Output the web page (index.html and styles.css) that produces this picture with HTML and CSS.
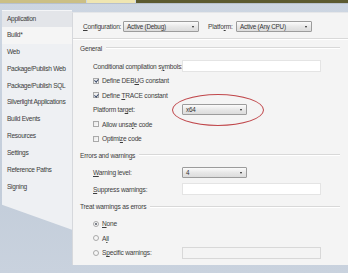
FILE: index.html
```html
<!DOCTYPE html>
<html lang="en">
<head>
  <meta charset="UTF-8">
  <title>Build properties</title>
  <link rel="stylesheet" href="styles.css">
</head>
<body>
  <div class="tabstrip">
    <span class="tab tab-a"></span>
    <span class="tab tab-b"></span>
    <span class="tab tab-c"></span>
  </div>

  <div class="frame">
    <ul class="nav">
      <li class="nav-item first">Application</li>
      <li class="nav-item active">Build*</li>
      <li class="nav-item">Web</li>
      <li class="nav-item">Package/Publish Web</li>
      <li class="nav-item">Package/Publish SQL</li>
      <li class="nav-item">Silverlight Applications</li>
      <li class="nav-item">Build Events</li>
      <li class="nav-item">Resources</li>
      <li class="nav-item">Settings</li>
      <li class="nav-item">Reference Paths</li>
      <li class="nav-item">Signing</li>
    </ul>

    <div class="panel">
      <div class="config-row">
        <span class="lbl cfg-lbl"><u>C</u>onfiguration:</span>
        <div class="select sel-config">Active (Debug)<span class="arrow"></span></div>
        <span class="lbl plat-lbl">Platfo<u>r</u>m:</span>
        <div class="select sel-config">Active (Any CPU)<span class="arrow"></span></div>
      </div>
      <div class="divider"></div>

      <div class="section-head first-head">General</div>
      <div class="row">
        <span class="row-lbl">Conditional compilation s<u>y</u>mbols:</span>
        <div class="textbox"></div>
      </div>
      <div class="row">
        <span class="check on"></span><span>Define DEB<u>U</u>G constant</span>
      </div>
      <div class="row">
        <span class="check on"></span><span>Define <u>T</u>RACE constant</span>
      </div>
      <div class="row target-row">
        <span class="row-lbl">Platform tar<u>g</u>et:</span>
        <div class="select sel-small">x64<span class="arrow"></span></div>
        <div class="ring"></div>
      </div>
      <div class="row">
        <span class="check"></span><span>Allow unsa<u>f</u>e code</span>
      </div>
      <div class="row">
        <span class="check"></span><span>Optimi<u>z</u>e code</span>
      </div>

      <div class="section-head">Errors and warnings</div>
      <div class="row tall first-tall">
        <span class="row-lbl"><u>W</u>arning level:</span>
        <div class="select sel-small">4<span class="arrow"></span></div>
      </div>
      <div class="row tall">
        <span class="row-lbl"><u>S</u>uppress warnings:</span>
        <div class="textbox"></div>
      </div>

      <div class="section-head">Treat warnings as errors</div>
      <div class="row first-radio">
        <span class="radio on"></span><span><u>N</u>one</span>
      </div>
      <div class="row">
        <span class="radio"></span><span>A<u>l</u>l</span>
      </div>
      <div class="row">
        <span class="radio"></span><span class="row-lbl radio-lbl">S<u>p</u>ecific warnings:</span>
        <div class="textbox dim"></div>
      </div>
    </div>
  </div>
</body>
</html>
```

FILE: styles.css
```css
html, body {
  margin: 0;
  padding: 0;
  height: 100%;
  overflow: hidden;
}

body {
  font-family: "Liberation Sans", Arial, sans-serif;
  font-size: 6.6px;
  letter-spacing: -0.2px;
  color: #3d3d3d;
  background: linear-gradient(#cdd6e2, #c3cdda 70%, #c9d2de);
}

u {
  text-decoration: underline;
  text-underline-offset: 1px;
}

.tabstrip {
  display: flex;
  height: 3px;
  border-bottom: 1px solid #b7c0cc;
}

.tab-a {
  width: 86px;
  background: #cbbf85;
}

.tab-b {
  width: 48px;
  margin-left: 1px;
  background: #efe6b2;
}

.tab-c {
  flex: 1;
  margin-left: 1px;
  background: #5b5a30;
}

.frame {
  display: flex;
  align-items: flex-start;
  padding-left: 2px;
}

/* left navigation */
.nav {
  list-style: none;
  margin: 6px 0 0;
  padding: 0 0 34px;
  width: 70px;
  background: #eef0f3;
  clip-path: polygon(0 0, 100% 0, 100% 100%, 0 calc(100% - 25px));
  position: relative;
  z-index: 2;
  letter-spacing: -0.3px;
}

.nav-item {
  height: 16.9px;
  line-height: 16.9px;
  padding-left: 5px;
  white-space: nowrap;
  color: #3c3c3c;
}

.nav-item.first {
  background: #e3e5e9;
  border-top: 1px solid #f4f5f7;
  height: 15.9px;
}

.nav-item.active {
  background: #f5f5f5;
  margin-right: -1px;
}

/* main panel */
.panel {
  flex: 1;
  margin-top: 8px;
  height: 253px;
  background: #f4f4f4;
  border-left: 1px solid #d6d8dc;
  border-top: 1px solid #e6e7e9;
  box-sizing: border-box;
  padding-left: 7px;
  position: relative;
}

.config-row {
  display: flex;
  align-items: center;
  height: 11px;
  margin-top: 8px;
  padding-left: 3px;
}

.cfg-lbl {
  width: 40px;
}

.plat-lbl {
  margin-left: 9px;
  width: 28px;
}

.select {
  position: relative;
  height: 11px;
  line-height: 10px;
  box-sizing: border-box;
  border: 1px solid #9c9c9c;
  border-radius: 1px;
  background: linear-gradient(#fbfbfb, #e6e6e6 55%, #dcdcdc);
  padding-left: 3px;
  font-size: 6.3px;
  color: #333;
}

.sel-config {
  width: 76px;
}

.sel-small {
  width: 65px;
}

.arrow {
  position: absolute;
  right: 4px;
  top: 4px;
  border-left: 1.5px solid transparent;
  border-right: 1.5px solid transparent;
  border-top: 2px solid #222;
}

.divider {
  margin: 6px 0 0 -7px;
  border-top: 1px solid #d9d9d9;
  border-bottom: 1px solid #ffffff;
}

.section-head {
  display: flex;
  align-items: center;
  height: 10px;
  margin-top: 4px;
  margin-right: 8px;
  white-space: nowrap;
}

.first-head {
  margin-top: 3px;
}

.section-head::after {
  content: "";
  flex: 1;
  margin-left: 4px;
  border-top: 1px solid #d8d8d8;
  border-bottom: 1px solid #fff;
}

.row {
  display: flex;
  align-items: center;
  height: 14.5px;
  padding-left: 13px;
  white-space: nowrap;
}

.section-head + .row {
  margin-top: 6px;
}

.row.tall {
  height: 17px;
}

.section-head + .row.first-tall {
  margin-top: 3.5px;
}

.section-head + .row.first-radio {
  margin-top: 4.75px;
}

.row-lbl {
  width: 89px;
  flex: none;
}

.radio-lbl {
  width: 80px;
}

.textbox {
  width: 139px;
  height: 12px;
  box-sizing: border-box;
  background: #ffffff;
  border: 1px solid #e4e4e4;
}

.textbox.dim {
  background: #f4f4f4;
  border-color: #d8d8d8;
}

.check {
  width: 6px;
  height: 6px;
  margin-right: 3px;
  box-sizing: border-box;
  border: 1px solid #a9a9a9;
  background: linear-gradient(135deg, #e8e8e8, #fafafa);
  position: relative;
}

.check.on::after {
  content: "";
  position: absolute;
  left: 1px;
  top: -0.5px;
  width: 1.5px;
  height: 3px;
  border-right: 1px solid #3b4b6b;
  border-bottom: 1px solid #3b4b6b;
  transform: rotate(40deg);
}

.radio {
  width: 6px;
  height: 6px;
  margin-right: 3px;
  box-sizing: border-box;
  border: 1px solid #a9a9a9;
  border-radius: 50%;
  background: #f6f6f6;
  position: relative;
}

.radio.on::after {
  content: "";
  position: absolute;
  left: 1px;
  top: 1px;
  width: 2px;
  height: 2px;
  border-radius: 50%;
  background: #555a66;
}

.target-row {
  position: relative;
}

/* red highlight ellipse drawn over the platform target */
.ring {
  position: absolute;
  left: 92px;
  top: -9px;
  width: 92px;
  height: 32px;
  box-sizing: border-box;
  border: 1px solid #c0474b;
  border-radius: 50%;
}
```
